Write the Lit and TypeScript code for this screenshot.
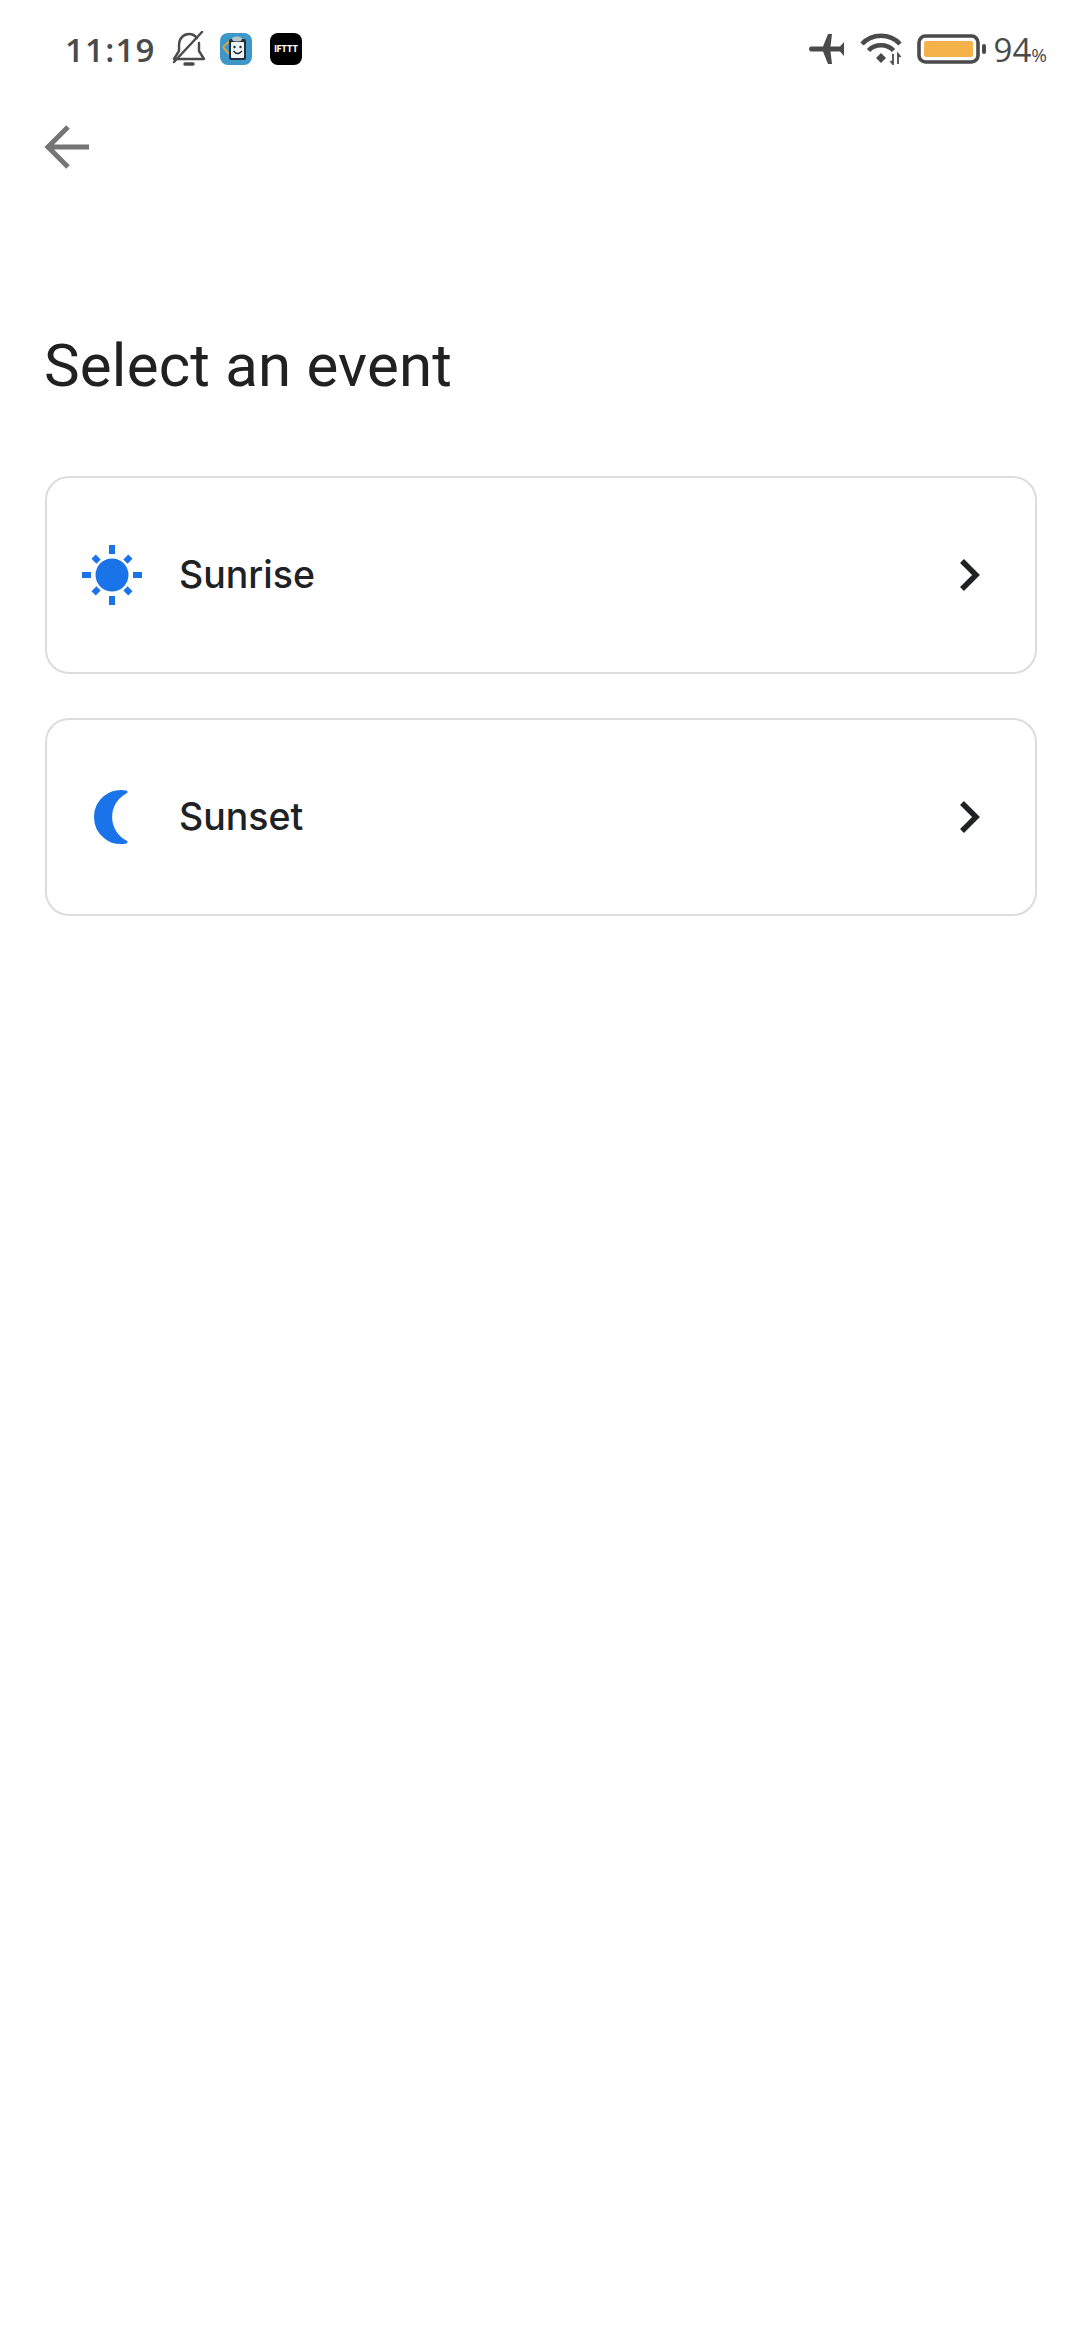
import { LitElement, html, css, svg } from "lit";
import { customElement } from "lit/decorators.js";

const sunRays = [0, 45, 90, 135, 180, 225, 270, 315];

@customElement("app-root")
export class AppRoot extends LitElement {
  static styles = css`
    :host { display: block; width: 1080px; height: 2340px; background: #fff; overflow: hidden; font-family: Roboto, sans-serif; }
    svg { display: block; flex: none; }
    .status { height: 98px; display: flex; align-items: center; padding: 0 33px 0 65px; color: #4a4a4a; box-sizing: border-box; }
    .time { font: 600 33px "Open Sans", sans-serif; letter-spacing: 1.2px; width: 107px; }
    .bell { margin-right: 14px; }
    .app { width: 32px; height: 32px; border-radius: 8px; }
    .blue { background: #3d97c8; margin-right: 18px; }
    .ifttt { background: #000; color: #fff; font: 900 8.5px Roboto, sans-serif; display: flex; align-items: center; justify-content: center; letter-spacing: 0; }
    .spacer { flex: 1; }
    .plane { margin-right: 15px; }
    .wifi { margin-right: 15px; }
    .battery { margin-right: 7px; }
    .pct { font: 500 33px "Open Sans", sans-serif; color: #4a4a4a; }
    .pct small { font-size: 19px; font-weight: 400; }
    .nav { padding: 26px 0 0 44px; }
    h1 { margin: 0; padding: 0 0 0 44px; font: 400 60px/70px Roboto, sans-serif; letter-spacing: 0.2px; color: #212121; margin-top: 161px; }
    .list { display: flex; flex-direction: column; gap: 44px; padding: 0 43px 0 45px; margin-top: 75px; }
    .card { height: 198px; box-sizing: border-box; border: 2px solid #dcdcdc; border-radius: 24px; display: flex; align-items: center; padding: 0 53px 0 33px; }
    .label { flex: 1; margin-left: 35px; padding-bottom: 2px; font: 450 37.5px Inter, sans-serif; color: #202124; }
  `;

  private sun() {
    return html`<svg width="64" height="64" viewBox="0 0 64 64" fill="#1a73e8">
      <circle cx="32" cy="32" r="16.5"></circle>
      ${sunRays.map(a => svg`<rect x="29" y="2" width="6" height="${a % 90 ? 7 : 9}" transform="rotate(${a} 32 32) ${a % 90 ? "translate(0 4)" : ""}"></rect>`)}
    </svg>`;
  }

  private moon() {
    return html`<svg width="64" height="64" viewBox="0 0 64 64" fill="#1a73e8" stroke="#1a73e8" stroke-width="3" stroke-linejoin="round">
      <path d="M46 7 A 25.5 25.5 0 1 0 46 57 A 28 28 0 0 1 46 7 Z"></path>
    </svg>`;
  }

  private chevron() {
    return html`<svg width="24" height="36" viewBox="0 0 24 36" fill="none" stroke="#202124" stroke-width="5.5"><path d="M4 4 L18 18 L4 32"></path></svg>`;
  }

  render() {
    return html`
      <div class="status">
        <span class="time">11:19</span>
        <svg class="bell" width="34" height="36" viewBox="0 0 34 36" fill="none" stroke="#4a4a4a" stroke-width="2.4" stroke-linejoin="round" stroke-linecap="round">
          <path d="M7 20 V14 C7 7 12 3 17 3 C20 3 23 4.5 25 7 M27 12 V20 L32 28 H2 L7 20"></path>
          <path d="M2 31 L30 1"></path>
          <path d="M13 33 H21" stroke-width="3.4"></path>
        </svg>
        <div class="app blue">
          <svg width="32" height="32" viewBox="0 0 32 32">
            <path d="M3 14 L11 7 M3 14 L9 21" stroke="#d9a441" stroke-width="2" fill="none"></path>
            <rect x="9" y="6" width="17" height="21" rx="2" fill="#22303a"></rect>
            <rect x="11" y="9" width="13" height="16" rx="1" fill="#eef3f5"></rect>
            <circle cx="14.5" cy="14" r="1.2" fill="#22303a"></circle>
            <circle cx="20.5" cy="14" r="1.2" fill="#22303a"></circle>
            <path d="M13.5 18 Q17.5 23 22 18" stroke="#22303a" stroke-width="1.5" fill="none"></path>
            <ellipse cx="17" cy="6" rx="5" ry="2.5" fill="#b9c4ca"></ellipse>
          </svg>
        </div>
        <div class="app ifttt">IFTTT</div>
        <span class="spacer"></span>
        <svg class="plane" width="36" height="30" viewBox="0 0 36 30" fill="#4a4a4a">
          <path d="M0 15 C0 13 1.5 12.5 3 12.5 H14 L19 0 H23 L21.5 12.5 H31 L35 8 V22 L31 17.5 H21.5 L23 30 H19 L14 17.5 H3 C1.5 17.5 0 17 0 15 Z"></path>
        </svg>
        <svg class="wifi" width="42" height="32" viewBox="0 0 42 32" fill="none" stroke="#4a4a4a" stroke-width="4.5">
          <path d="M2 11 C12 0 30 0 40 11"></path>
          <path d="M8.5 17.5 C15 10.5 27 10.5 33.5 17.5"></path>
          <path d="M16 25 L21 20 L26 25 L21 30 Z" fill="#4a4a4a" stroke="none"></path>
          <path d="M33 21 V31 L30.5 28 M38 31 V21 L40.5 24" stroke-width="1.8"></path>
        </svg>
        <svg class="battery" width="70" height="30" viewBox="0 0 70 30">
          <rect x="2" y="2" width="59" height="26" rx="6.5" fill="none" stroke="#4a4a4a" stroke-width="3.6"></rect>
          <rect x="7" y="7" width="49" height="16" rx="2" fill="#f6b24a"></rect>
          <rect x="65" y="10" width="4" height="10" rx="2" fill="#4a4a4a"></rect>
        </svg>
        <span class="pct">94<small>%</small></span>
      </div>
      <div class="nav">
        <svg width="46" height="46" viewBox="0 0 46 46" fill="none" stroke="#757575" stroke-width="5">
          <path d="M45 23 H4 M24 3 L4 23 L24 43"></path>
        </svg>
      </div>
      <h1>Select an event</h1>
      <div class="list">
        <div class="card">${this.sun()}<span class="label">Sunrise</span>${this.chevron()}</div>
        <div class="card">${this.moon()}<span class="label">Sunset</span>${this.chevron()}</div>
      </div>
    `;
  }
}
